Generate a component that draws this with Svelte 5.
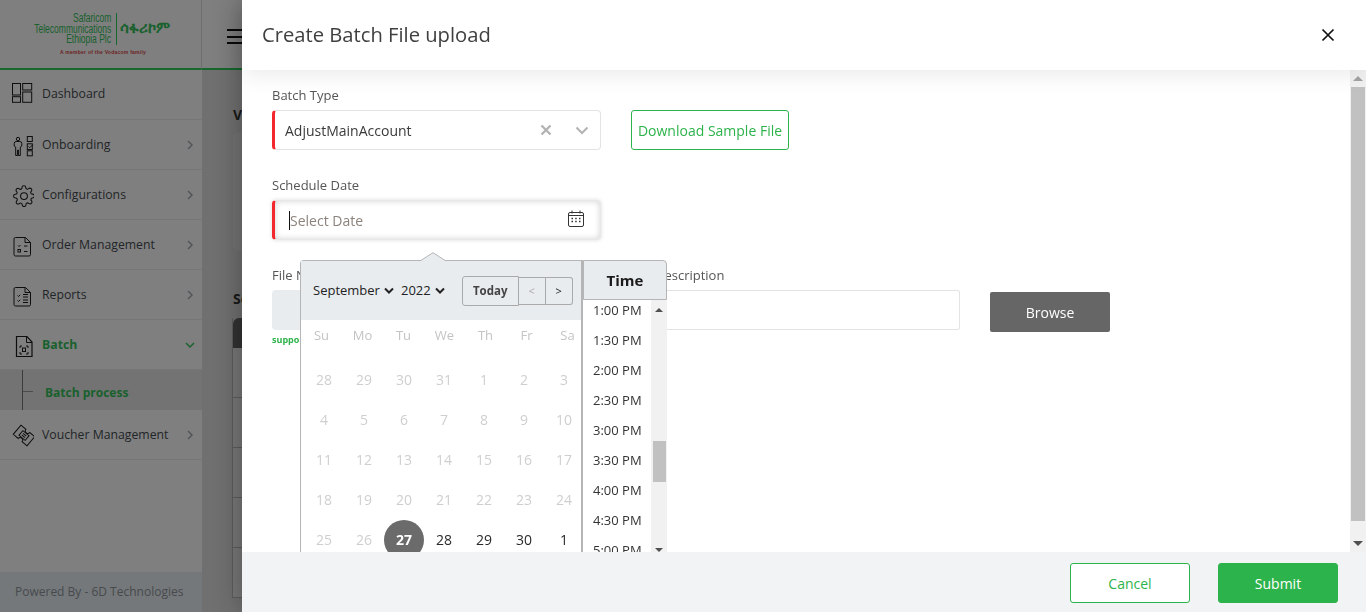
<script>
	const menu = [
		{ label: 'Dashboard', icon: 'dashboard' },
		{ label: 'Onboarding', icon: 'onboarding', arrow: true },
		{ label: 'Configurations', icon: 'gear', arrow: true },
		{ label: 'Order Management', icon: 'order', arrow: true },
		{ label: 'Reports', icon: 'reports', arrow: true },
		{ label: 'Batch', icon: 'batch', arrow: true, open: true },
		{ label: 'Voucher Management', icon: 'voucher', arrow: true }
	];
	const weekdays = ['Su', 'Mo', 'Tu', 'We', 'Th', 'Fr', 'Sa'];
	const prior = [28, 29, 30, 31, 1, 2, 3, 4, 5, 6, 7, 8, 9, 10, 11, 12, 13, 14, 15, 16, 17, 18, 19, 20, 21, 22, 23, 24, 25, 26];
	const times = ['1:00 PM', '1:30 PM', '2:00 PM', '2:30 PM', '3:00 PM', '3:30 PM', '4:00 PM', '4:30 PM', '5:00 PM'];
</script>

{#snippet icon(name)}
	<svg class="nav-icon" viewBox="0 0 24 24" fill="none" stroke="#1c1c1c" stroke-width="1">
		{#if name === 'dashboard'}
			<rect x="2.500" y="0.500" width="8" height="11.500" />
			<rect x="2.500" y="13.700" width="8" height="5.600" />
			<rect x="12.700" y="0.500" width="9" height="6.500" />
			<rect x="12.700" y="9" width="9" height="10.300" />
		{:else if name === 'onboarding'}
			<circle cx="8" cy="6" r="1.700" />
			<path d="M4.200 13v-2.500a2 2 0 0 1 2-2h3.600a2 2 0 0 1 2 2V13l-1.500 1v8.500H8.400V17h-.8v5.500H5.700V14z" />
			<rect x="17.300" y="3.500" width="5" height="5" />
			<rect x="17.300" y="10.800" width="5" height="5.700" />
			<path d="M18.500 13.500l1.300 1.200 3-3" />
			<rect x="17.300" y="17.800" width="5" height="5" />
		{:else if name === 'gear'}
			<g transform="translate(2.600 1.700) scale(.95)" stroke-width="1.100">
				<circle cx="12" cy="12" r="3.600" />
				<path d="M19.400 15a1.650 1.650 0 0 0 .33 1.820l.06.06a2 2 0 1 1-2.830 2.830l-.06-.06a1.650 1.650 0 0 0-2.820 1.170V21a2 2 0 1 1-4 0v-.09a1.650 1.650 0 0 0-2.820-1.170l-.06.06a2 2 0 1 1-2.830-2.830l.06-.06a1.650 1.650 0 0 0-1.170-2.820H3a2 2 0 1 1 0-4h.09a1.650 1.650 0 0 0 1.170-2.820l-.06-.06a2 2 0 1 1 2.830-2.830l.06.06a1.650 1.650 0 0 0 2.820-1.170V3a2 2 0 1 1 4 0v.09a1.650 1.650 0 0 0 2.820 1.170l.06-.06a2 2 0 1 1 2.830 2.830l-.06.06a1.650 1.650 0 0 0 1.170 2.820H21a2 2 0 1 1 0 4h-.09a1.650 1.650 0 0 0-1.510 1z" />
			</g>
		{:else if name === 'order'}
			<path d="M5.500 4.500h10l5 5v12a1.500 1.500 0 0 1-1.500 1.500H5.500A1.500 1.500 0 0 1 4 21.500V6a1.500 1.500 0 0 1 1.500-1.500z" />
			<path d="M15 4.500v5h5.500" />
			<path d="M8 12.500l1 1 1.500-1.500M14 13h3.500M14 18.500h3.500" />
			<rect x="8" y="16.500" width="2.500" height="2.500" />
		{:else if name === 'reports'}
			<path d="M5.500 4.500h10l5 5v12a1.500 1.500 0 0 1-1.500 1.500H5.500A1.500 1.500 0 0 1 4 21.500V6a1.500 1.500 0 0 1 1.500-1.500z" />
			<path d="M15 4.500v5h5.500" />
			<path d="M7.500 12.500l1 1 1.700-1.700M7.500 17.500l1 1 1.700-1.700M13 11.500h5M13 14h5M13 17h5M13 19.500h5" />
		{:else if name === 'batch'}
			<path d="M6.500 3.500h10.500l5 5.500v14.500H6.500z" stroke-width="1.200" />
			<path d="M16.500 3.500v6h5.500" />
			<path d="M10 15v-2h2M16 13h2v2M18 19v2h-2M12 21h-2v-2" />
			<rect x="12.500" y="15" width="3" height="3.500" />
		{:else}
			<g transform="rotate(40 14 12.500)">
				<path d="M5 6.500h6.500a2.500 2.500 0 0 0 5 0H23v12h-6.500a2.500 2.500 0 0 0-5 0H5z" />
				<rect x="10" y="9.500" width="8" height="6" />
				<path d="M12 11.500h4M12 13.500h4" />
			</g>
		{/if}
	</svg>
{/snippet}

<div class="shell">
	<aside class="sidebar">
		<div class="brand">
			<div class="logo">
				<div class="logo-top">
					<div class="logo-name">
						<span>Safaricom</span>
						<span>Telecommunications</span>
						<span>Ethiopia Plc</span>
					</div>
					<div class="logo-am">ሳፋሪኮም</div>
				</div>
				<div class="logo-tag">A member of the Vodacom family</div>
			</div>
		</div>

		<nav class="nav">
			{#each menu as item}
				<div class="nav-row" class:open={item.open}>
					{@render icon(item.icon)}
					<span class="nav-label">{item.label}</span>
					{#if item.arrow}
						<svg class="chev" viewBox="0 0 10 12" fill="none" stroke-width="1.500">
							{#if item.open}
								<path d="M1 4l4 4 4-4" />
							{:else}
								<path d="M3 2l4 4-4 4" />
							{/if}
						</svg>
					{/if}
				</div>
				{#if item.open}
					<div class="sub-row">
						<span class="tree"></span>
						<span class="sub-label">Batch process</span>
					</div>
				{/if}
			{/each}
		</nav>

		<div class="powered">Powered By - 6D Technologies</div>
	</aside>

	<main class="content">
		<div class="topbar">
			<div class="burger"><i></i><i></i><i></i></div>
		</div>
		<div class="page">
			<h3>View Batch</h3>
			<div class="search-card"></div>
			<h3 class="second">Search Result</h3>
			<div class="table">
				<div class="table-head"></div>
				<div class="table-row"></div>
				<div class="table-row"></div>
				<div class="table-row"></div>
				<div class="table-row"></div>
				<div class="table-row"></div>
			</div>
		</div>
	</main>
</div>

<div class="backdrop"></div>

<section class="drawer">
	<header class="drawer-head">
		<h2>Create Batch File upload</h2>
		<svg class="close" viewBox="0 0 14 14" fill="none" stroke="#111" stroke-width="1.700">
			<path d="M1.500 1.500l11 11M12.500 1.500l-11 11" />
		</svg>
	</header>

	<div class="drawer-body">
		<div class="form">
			<div class="row">
				<div class="field">
					<span class="label">Batch Type</span>
					<div class="control required select">
						<span class="value">AdjustMainAccount</span>
						<svg class="clear" viewBox="0 0 12 12" fill="none" stroke="#b3b3b3" stroke-width="2.400">
							<path d="M1.500 1.500l9 9M10.500 1.500l-9 9" />
						</svg>
						<svg class="drop" viewBox="0 0 14 9" fill="none" stroke="#b3b3b3" stroke-width="2">
							<path d="M1.500 1.500l5.500 5.500 5.500-5.500" />
						</svg>
					</div>
				</div>
				<button class="btn-sample">Download Sample File</button>
			</div>

			<div class="row">
				<div class="field date-field">
					<span class="label">Schedule Date</span>
					<div class="control required focused">
						<span class="caret"></span>
						<span class="placeholder">Select Date</span>
						<svg class="cal" viewBox="0 0 16 17" fill="none" stroke="#333" stroke-width="1">
							<rect x="0.500" y="2.500" width="15" height="14" rx="1.500" />
							<path d="M0.500 5.500h15M4 0.500v3M12 0.500v3" />
							<path d="M3.500 8.500h1.500M7.200 8.500h1.500M11 8.500h1.500M3.500 11.500h1.500M7.200 11.500h1.500M11 11.500h1.500" stroke-width="1.400" />
						</svg>
					</div>

					<div class="picker">
						<svg class="nub" viewBox="0 0 26 9">
							<path d="M0 9L13 0.700 26 9" fill="#e9ecef" stroke="#b5b5b5" />
						</svg>
						<div class="cal-pane">
							<div class="cal-head">
								<span class="month">September</span>
								<svg class="sel" viewBox="0 0 10 7" fill="none" stroke="#222" stroke-width="2"><path d="M1 1.500l4 4 4-4" /></svg>
								<span class="year">2022</span>
								<svg class="sel" viewBox="0 0 10 7" fill="none" stroke="#222" stroke-width="2"><path d="M1 1.500l4 4 4-4" /></svg>
								<button class="today">Today</button>
								<div class="pager"><span class="off">&lt;</span><span>&gt;</span></div>
							</div>
							<div class="weekdays">
								{#each weekdays as d}
									<span>{d}</span>
								{/each}
							</div>
							<div class="days">
								{#each prior as d}
									<span class="day off">{d}</span>
								{/each}
								<span class="day picked">27</span>
								<span class="day">28</span>
								<span class="day">29</span>
								<span class="day">30</span>
								<span class="day">1</span>
							</div>
						</div>
						<div class="time-pane">
							<div class="time-head">Time</div>
							<div class="time-list">
								{#each times as t}
									<span class="time">{t}</span>
								{/each}
								<div class="mini-bar">
									<svg class="up" viewBox="0 0 8 4"><path d="M0 4l4-4 4 4z" fill="#505050" /></svg>
									<span class="mini-thumb"></span>
									<svg class="down" viewBox="0 0 8 4"><path d="M0 0l4 4 4-4z" fill="#505050" /></svg>
								</div>
							</div>
						</div>
					</div>
				</div>
			</div>

			<div class="row file-row">
				<div class="field file-field">
					<span class="label">File Name</span>
					<div class="file-box"></div>
					<span class="hint">supported file type : csv</span>
				</div>
				<div class="field desc-field">
					<span class="label">Description</span>
					<div class="desc-box"></div>
				</div>
				<button class="btn-browse">Browse</button>
			</div>
		</div>

		<div class="scrollbar">
			<svg viewBox="0 0 10 5"><path d="M0 5l5-5 5 5z" fill="#a3a3a3" /></svg>
			<span class="thumb"></span>
			<svg viewBox="0 0 10 5"><path d="M0 0l5 5 5-5z" fill="#505050" /></svg>
		</div>
	</div>

	<footer class="drawer-foot">
		<button class="btn-cancel">Cancel</button>
		<button class="btn-submit">Submit</button>
	</footer>
</section>

<style>
	:global(body) {
		font-family: 'Open Sans', sans-serif;
		overflow: hidden;
	}

	button {
		font-family: inherit;
		cursor: pointer;
	}

	.shell {
		display: flex;
		height: 612px;
		overflow: hidden;
		background: #e1e1e1;
	}

	.sidebar {
		width: 202px;
		flex: none;
		display: flex;
		flex-direction: column;
		background: #fff;
	}

	.brand {
		height: 68px;
		flex: none;
		border-bottom: 2px solid #2ecf5c;
		border-right: 1px solid #d8e0da;
		box-sizing: content-box;
	}

	.logo {
		padding: 13px 0 0 16px;
	}

	.logo-top {
		display: flex;
		height: 32px;
	}

	.logo-name {
		width: 95px;
		padding-right: 5px;
		border-right: 1px solid #2ecf5c;
		display: flex;
		flex-direction: column;
		align-items: flex-end;
		color: #34c25c;
		font: 12.500px/10.500px 'Liberation Sans', sans-serif;
	}

	.logo-name span {
		display: block;
		white-space: nowrap;
		transform: scaleX(0.68);
		transform-origin: right;
	}

	.logo-am {
		padding: 5px 0 0 3px;
		font: bold 14.500px/18px 'Noto Sans', 'DejaVu Sans', sans-serif;
		color: #34c25c;
	}

	.logo-tag {
		margin: 3px 0 0 44px;
		font: bold 5px/8px 'Liberation Sans', sans-serif;
		letter-spacing: 0.250px;
		color: #d84a4a;
		white-space: nowrap;
	}

	.nav {
		flex: 1;
	}

	.nav-row {
		height: 49px;
		display: flex;
		align-items: center;
		padding-left: 10px;
		border-bottom: 1px solid #ecedee;
		color: #454b50;
		font-size: 12.250px;
	}

	.nav-row:first-child .nav-label {
		margin-top: -2px;
	}

	.nav-icon {
		width: 24px;
		height: 24px;
		flex: none;
		margin-right: 8px;
	}

	.nav-label {
		flex: 1;
		white-space: nowrap;
	}

	.chev {
		width: 10px;
		height: 12px;
		margin-right: 7px;
		stroke: #a5adb3;
	}

	.open {
		color: #34c25c;
		font-weight: 700;
	}

	.open .chev {
		stroke: #34c25c;
	}

	.sub-row {
		height: 40px;
		position: relative;
		display: flex;
		align-items: center;
		padding-left: 45px;
		background: #e6e6e6;
	}

	.tree {
		position: absolute;
		left: 22px;
		top: 0;
		width: 10px;
		height: 21px;
		border-left: 1px solid #777;
		border-bottom: 1px solid #999;
	}

	.tree::after {
		content: '';
		position: absolute;
		left: -1px;
		top: 21px;
		height: 19px;
		border-left: 1px solid #777;
	}

	.sub-label {
		margin-top: 5px;
		font-size: 12px;
		font-weight: 700;
		color: #34c25c;
	}

	.powered {
		height: 40px;
		flex: none;
		display: flex;
		align-items: center;
		padding: 0 0 2px 15px;
		box-sizing: border-box;
		background: #ebf1f6;
		color: #8d949a;
		font-size: 12px;
	}

	.content {
		flex: 1;
		min-width: 0;
	}

	.topbar {
		height: 68px;
		background: #fff;
		border-bottom: 2px solid #2ecf5c;
		position: relative;
	}

	.burger {
		position: absolute;
		left: 25px;
		top: 29px;
		display: flex;
		flex-direction: column;
		gap: 4.500px;
	}

	.burger i {
		display: block;
		width: 18px;
		height: 2px;
		background: #111;
	}

	.page {
		padding: 36px 0 0 31px;
	}

	.page h3 {
		margin: 0;
		font-size: 14px;
		line-height: 18px;
		font-weight: 700;
		color: #333;
		white-space: nowrap;
	}

	.search-card {
		width: 800px;
		height: 119px;
		margin-top: 8px;
		background: #e9e9e9;
		border-radius: 6px;
	}

	.page .second {
		margin-top: 39px;
	}

	.table {
		margin: 10px 0 0 -1px;
		width: 800px;
		border-left: 1px solid #bbb;
	}

	.table-head {
		height: 30px;
		background: #666;
		border-radius: 6px 0 0 0;
	}

	.table-row {
		height: 49px;
		border-bottom: 1px solid #bbb;
		background: #f1f1f1;
	}

	.backdrop {
		position: fixed;
		inset: 0;
		background: rgba(0, 0, 0, 0.5);
	}

	.drawer {
		position: fixed;
		left: 242px;
		right: 0;
		top: 0;
		height: 612px;
		display: flex;
		flex-direction: column;
		background: #fff;
		box-shadow: 0 0 30px rgba(0, 0, 0, 0.35);
	}

	.drawer-head {
		height: 70px;
		flex: none;
		display: flex;
		align-items: center;
		justify-content: space-between;
		padding: 0 31px 0 20px;
		background: #fff;
		position: relative;
		z-index: 2;
		box-shadow: 0 4px 24px rgba(0, 0, 0, 0.09);
	}

	.drawer-head h2 {
		margin: -2px 0 0;
		font-size: 20.200px;
		font-weight: 400;
		color: #404040;
	}

	.close {
		width: 14px;
		height: 14px;
	}

	.drawer-body {
		flex: 1;
		position: relative;
		overflow: hidden;
	}

	.form {
		padding: 16px 0 0 30px;
		display: flex;
		flex-direction: column;
		gap: 26px;
	}

	.row {
		display: flex;
		align-items: flex-end;
		gap: 30px;
	}

	.field {
		display: flex;
		flex-direction: column;
	}

	.label {
		font-size: 13px;
		line-height: 18px;
		margin-bottom: 6px;
		color: #555;
		white-space: nowrap;
	}

	.control {
		width: 329px;
		height: 40px;
		box-sizing: border-box;
		display: flex;
		align-items: center;
		border: 1px solid #e3e3e3;
		border-radius: 4px;
		background: #fff;
	}

	.required {
		border-left: 3px solid #f2282d;
	}

	.select {
		padding-left: 10px;
	}

	.value {
		flex: 1;
		font-size: 14px;
		color: #3a3a3a;
	}

	.clear {
		width: 12px;
		height: 12px;
		margin-right: 23px;
	}

	.drop {
		width: 14px;
		height: 9px;
		margin-right: 11px;
	}

	.btn-sample {
		width: 158px;
		height: 40px;
		padding: 0;
		background: #fff;
		border: 1px solid #2db34b;
		border-radius: 3px;
		color: #2db34b;
		font-size: 14px;
	}

	.focused {
		border-color: #e8e8e8;
		border-left-color: #f2282d;
		box-shadow:
			0 0 4px rgba(0, 0, 0, 0.14),
			inset 0 0 6px rgba(0, 0, 0, 0.18);
		padding-left: 14px;
		position: relative;
	}

	.caret {
		width: 1px;
		height: 19px;
		background: #111;
		flex: none;
	}

	.placeholder {
		flex: 1;
		font-size: 14px;
		color: #8c837d;
	}

	.cal {
		width: 16px;
		height: 17px;
		margin-right: 16px;
		margin-top: -3px;
	}

	.date-field {
		position: relative;
	}

	.picker {
		position: absolute;
		left: 28px;
		top: 84px;
		z-index: 1;
		display: flex;
	}

	.nub {
		position: absolute;
		left: 120px;
		top: -8px;
		width: 26px;
		height: 9px;
	}

	.cal-pane {
		width: 283px;
		height: 400px;
		box-sizing: border-box;
		background: #fff;
		border: 1px solid #b5b5b5;
		border-right-width: 2px;
		border-radius: 4px 0 0 0;
	}

	.cal-head {
		height: 59px;
		display: flex;
		align-items: center;
		padding: 0 0 2px 12px;
		box-sizing: border-box;
		background: #e9ecef;
		font-size: 13px;
		color: #222;
	}

	.sel {
		width: 10px;
		height: 7px;
		margin: 1px 0 0 4px;
	}

	.month {
		width: 67px;
		white-space: nowrap;
	}

	.year {
		margin-left: 7px;
	}

	.today {
		width: 57px;
		height: 30px;
		margin: 2px 0 0 17px;
		padding: 0;
		background: #e9ecef;
		border: 1px solid #aaa;
		border-radius: 3px 0 0 3px;
		font-size: 11.500px;
		font-weight: 700;
		color: #444;
	}

	.pager {
		width: 54px;
		height: 28px;
		margin-top: 2px;
		box-sizing: border-box;
		display: flex;
		border: 1px solid #aaa;
		border-left: 0;
		border-radius: 0 3px 3px 0;
		font-size: 11px;
		color: #222;
	}

	.pager span {
		flex: 1;
		display: flex;
		align-items: center;
		justify-content: center;
	}

	.pager .off {
		border-right: 1px solid #aaa;
		color: #aaa;
	}

	.weekdays {
		display: grid;
		grid-template-columns: repeat(7, 41px);
		height: 30px;
		align-items: center;
		justify-items: center;
		font-size: 13px;
		color: #c4c4c4;
		margin-bottom: 10px;
	}

	.days {
		display: grid;
		grid-template-columns: repeat(7, 40px);
		grid-auto-rows: 40px;
		padding-left: 3px;
		font-size: 14px;
	}

	.day {
		display: flex;
		align-items: center;
		justify-content: center;
		padding-bottom: 2px;
		box-sizing: border-box;
		color: #2a2a2a;
	}

	.day.off {
		color: #cfcfcf;
	}

	.day.picked {
		background: #6b6b6b;
		border-radius: 50%;
		color: #fff;
		font-weight: 700;
	}

	.time-pane {
		width: 84px;
	}

	.time-head {
		height: 40px;
		box-sizing: border-box;
		display: flex;
		align-items: center;
		justify-content: center;
		background: #e9ecef;
		border: 1px solid #b5b5b5;
		border-radius: 0 4px 0 0;
		font-size: 15px;
		font-weight: 700;
		color: #1a1a1a;
	}

	.time-list {
		position: relative;
		height: 300px;
		display: flex;
		flex-direction: column;
		padding-left: 10px;
		background: #fff;
		overflow: hidden;
	}

	.time {
		height: 30px;
		line-height: 20px;
		flex: none;
		font-size: 13px;
		color: #333;
	}

	.mini-bar {
		position: absolute;
		right: 0;
		top: 0;
		bottom: 0;
		width: 16px;
		background: #f1f1f1;
	}

	.mini-bar svg {
		position: absolute;
		left: 4px;
		width: 8px;
		height: 4px;
	}

	.mini-bar .up {
		top: 8px;
	}

	.mini-bar .down {
		top: 248px;
	}

	.mini-thumb {
		position: absolute;
		left: 2px;
		top: 141px;
		width: 13px;
		height: 41px;
		background: #c1c1c1;
	}

	.file-row {
		align-items: flex-start;
		gap: 0;
	}

	.file-field {
		width: 383px;
	}

	.file-box {
		width: 329px;
		height: 40px;
		background: #e9ecef;
		border-radius: 4px;
	}

	.hint {
		margin-top: 4px;
		font-size: 9px;
		line-height: 12px;
		font-weight: 700;
		color: #2db34b;
		white-space: nowrap;
	}

	.desc-field {
		width: 305px;
	}

	.desc-box {
		height: 40px;
		box-sizing: border-box;
		border: 1px solid #e3e3e3;
		border-radius: 2px;
	}

	.btn-browse {
		width: 120px;
		height: 40px;
		margin: 26px 0 0 30px;
		background: #666;
		border: 0;
		border-radius: 2px;
		color: #fff;
		font-size: 14px;
	}

	.scrollbar {
		position: absolute;
		right: 0;
		top: 0;
		bottom: 0;
		width: 16px;
		background: #f1f1f1;
		z-index: 1;
	}

	.scrollbar svg {
		position: absolute;
		left: 3px;
		width: 10px;
		height: 5px;
	}

	.scrollbar svg:first-child {
		top: 6px;
	}

	.scrollbar svg:last-child {
		bottom: 6px;
	}

	.thumb {
		position: absolute;
		left: 1px;
		top: 17px;
		width: 14px;
		height: 434px;
		background: #c1c1c1;
	}

	.drawer-foot {
		height: 60px;
		flex: none;
		display: flex;
		justify-content: flex-end;
		align-items: center;
		gap: 28px;
		padding: 2px 28px 0 0;
		box-sizing: border-box;
		background: #f2f3f5;
		position: relative;
		z-index: 2;
	}

	.drawer-foot button {
		width: 120px;
		height: 40px;
		border-radius: 3px;
		font-size: 14px;
	}

	.btn-cancel {
		background: #fff;
		border: 1px solid #2db34b;
		color: #2db34b;
	}

	.btn-submit {
		background: #2db34b;
		border: 1px solid #2db34b;
		color: #fff;
	}
</style>
